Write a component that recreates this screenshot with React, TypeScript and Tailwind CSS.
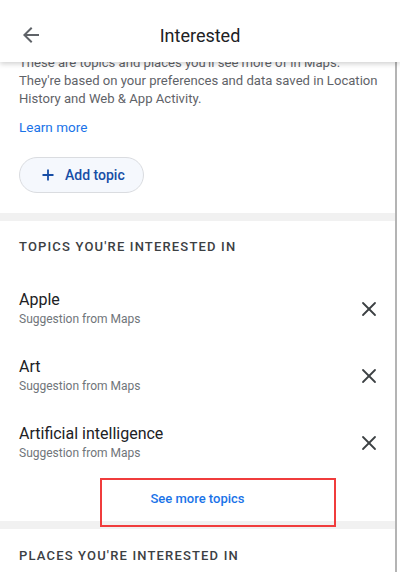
import { X } from 'lucide-react';

const topics = ['Apple', 'Art', 'Artificial intelligence'];

function BackArrow() {
  return (
    <svg width="24" height="24" viewBox="0 0 24 24" fill="#5f6368">
      <path d="M20 11H7.83l5.59-5.59L12 4l-8 8 8 8 1.41-1.41L7.83 13H20v-2z" />
    </svg>
  );
}

function TopicRow({ name }: { name: string }) {
  return (
    <div className="flex items-center h-[67px] pl-[19px] pr-[14px]">
      <div className="flex-1">
        <div className="text-[16px] leading-[20px] text-[#202124]">{name}</div>
        <div className="text-[12px] leading-[16px] text-[#70757a] mt-[1px]">Suggestion from Maps</div>
      </div>
      <X size={24} strokeWidth={1.8} className="text-[#3c4043]" />
    </div>
  );
}

export default function App() {
  return (
    <div
      className="w-[400px] h-[572px] overflow-hidden bg-white flex flex-col"
      style={{ fontFamily: 'Roboto, "Noto Sans", sans-serif' }}
    >
      <header className="relative z-10 h-[62px] shrink-0 bg-white flex items-center pt-[8px] shadow-[0_2px_5px_rgba(0,0,0,0.18)]">
        <div className="pl-[19px] w-[80px]">
          <BackArrow />
        </div>
        <h1 className="flex-1 text-center text-[18px] text-[#202124] pr-[80px]">Interested</h1>
      </header>

      <div className="flex flex-1 min-h-0">
        <main className="flex-1 min-w-0">
          <div className="pl-[19px] pr-[10px] -mt-[8px]">
            <p className="text-[13.1px] leading-[18px] text-[#5f6368] whitespace-nowrap">
              These are topics and places you'll see more of in Maps.
              <br />
              They're based on your preferences and data saved in Location
              <br />
              History and Web &amp; App Activity.
            </p>
            <div className="mt-[10px] text-[13.5px] leading-[18px] text-[#1a73e8]">Learn more</div>
            <button className="mt-[21px] h-[36px] flex items-center rounded-full border border-[#dadce0] bg-[#f5f8fd] pl-[22px] pr-[18px] text-[14px] font-medium text-[#174ea6]">
              <svg width="12" height="12" viewBox="0 0 12 12" stroke="#174ea6" strokeWidth="1.8">
                <path d="M6 0.5v11M0.5 6h11" />
              </svg>
              <span className="ml-[11px]">Add topic</span>
            </button>
          </div>

          <div className="mt-[20px] h-[8px] bg-[#f1f1f1]" />

          <div className="pt-[18px] px-[19px] text-[13px] leading-[16px] font-medium tracking-[0.09em] text-[#3c4043]">
            TOPICS YOU'RE INTERESTED IN
          </div>
          <div className="pt-[20px]">
            {topics.map((t) => (
              <TopicRow key={t} name={t} />
            ))}
          </div>
          <div className="relative h-[45px] flex items-center justify-center">
            <span className="text-[13px] font-medium text-[#1a73e8]">See more topics</span>
            <div className="absolute z-10 left-[100px] top-[2px] w-[236px] h-[49px] border-[2px] border-[#f03c3c]" />
          </div>
          <div className="h-[8px] bg-[#f1f1f1]" />
          <div className="pt-[19px] px-[19px] text-[13px] leading-[16px] font-medium tracking-[0.09em] text-[#3c4043]">
            PLACES YOU'RE INTERESTED IN
          </div>
        </main>
        <div className="w-[2px] bg-[#b4b4b4]" />
        <div className="w-[3px] bg-white" />
      </div>
    </div>
  );
}
